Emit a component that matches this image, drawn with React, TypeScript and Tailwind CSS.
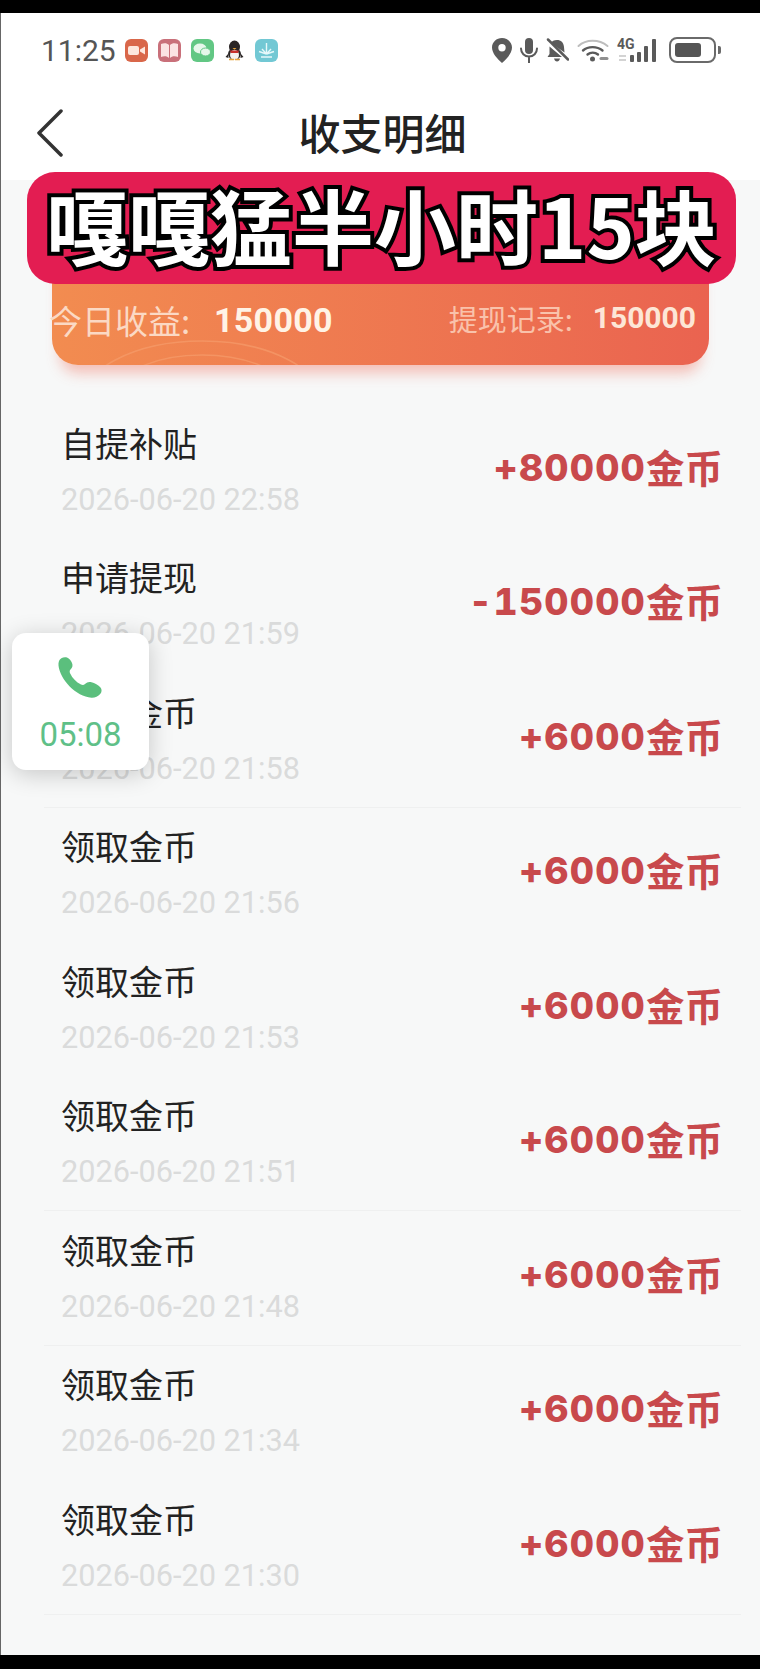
import React from 'react';

const CJK = "font-['Noto_Sans_CJK_SC','Noto_Sans',sans-serif]";

interface Entry {
  title: string;
  time: string;
  amount: string;
  divider?: boolean;
}

const entries: Entry[] = [
  { title: '自提补贴', time: '2026-06-20 22:58', amount: '+80000' },
  { title: '申请提现', time: '2026-06-20 21:59', amount: '-150000' },
  { title: '领取金币', time: '2026-06-20 21:58', amount: '+6000', divider: true },
  { title: '领取金币', time: '2026-06-20 21:56', amount: '+6000' },
  { title: '领取金币', time: '2026-06-20 21:53', amount: '+6000' },
  { title: '领取金币', time: '2026-06-20 21:51', amount: '+6000', divider: true },
  { title: '领取金币', time: '2026-06-20 21:48', amount: '+6000', divider: true },
  { title: '领取金币', time: '2026-06-20 21:34', amount: '+6000' },
  { title: '领取金币', time: '2026-06-20 21:30', amount: '+6000', divider: true },
];

const AppIcon: React.FC<{ color: string; children: React.ReactNode }> = ({ color, children }) => (
  <div className={`w-[23px] h-[23px] rounded-[6px] flex items-center justify-center ${color}`}>{children}</div>
);

const NotificationIcons = () => (
  <div className="flex items-center gap-[10px] ml-[9px]">
    <AppIcon color="bg-[#d9674a]">
      <svg width="17" height="11" viewBox="0 0 17 11">
        <rect x="0" y="1" width="11" height="9" rx="2" fill="#fde7dd" />
        <path d="M12 4.500 17 1.500v8l-5-3z" fill="#fde7dd" />
      </svg>
    </AppIcon>
    <AppIcon color="bg-[#c9707a]">
      <svg width="17" height="15" viewBox="0 0 17 15">
        <path d="M0 1c3-1 6-1 8 1v13c-2-2-5-2-8-1z" fill="#fbe3e3" />
        <path d="M17 1c-3-1-6-1-8 1v13c2-2 5-2 8-1z" fill="#fbe3e3" />
      </svg>
    </AppIcon>
    <AppIcon color="bg-[#62c784]">
      <svg width="18" height="14" viewBox="0 0 18 14">
        <ellipse cx="7" cy="5.500" rx="6.500" ry="5" fill="#e6f7ea" />
        <ellipse cx="12.500" cy="9" rx="5" ry="4" fill="#e6f7ea" stroke="#62c784" />
      </svg>
    </AppIcon>
    <svg width="19" height="21" viewBox="0 0 19 21" className="mx-[1px]">
      <ellipse cx="9.500" cy="7" rx="5.500" ry="6.500" fill="#2b2626" />
      <ellipse cx="9.500" cy="14" rx="6.500" ry="6" fill="#2b2626" />
      <ellipse cx="9.500" cy="15" rx="4.500" ry="5" fill="#f5f0ee" />
      <path d="M5 10.500h9l-1 2.500H6z" fill="#c9302c" />
      <path d="M7.500 8h4l-2 1.800z" fill="#e8a33a" />
      <path d="M3 14 .5 17l3 1zM16 14l2.500 3-3 1z" fill="#2b2626" />
      <path d="M4 19.500h5M10 19.500h5" stroke="#e8a33a" strokeWidth="1.500" />
    </svg>
    <AppIcon color="bg-[#72c8d4]">
      <svg width="17" height="15" viewBox="0 0 17 15" fill="none" stroke="#e6f8fa" strokeWidth="1.400">
        <path d="M8.500 0v11M8.500 11 4 6M8.500 11 13 6M8.500 11 1 8.500M8.500 11 16 8.500M3 14h11" />
      </svg>
    </AppIcon>
  </div>
);

const SystemIcons = () => (
  <div className="flex items-center text-[#5a5a5a]">
    <svg width="20" height="25" viewBox="0 0 20 25" fill="currentColor">
      <path fillRule="evenodd" d="M10 0c5.500 0 10 4.200 10 9.500 0 5.500-5 11-10 15.500C5 20.500 0 15 0 9.500 0 4.200 4.500 0 10 0zm0 6a3.700 3.700 0 1 0 0 7.400A3.700 3.700 0 0 0 10 6z" />
    </svg>
    <svg width="18" height="25" viewBox="0 0 18 25" className="ml-[8px]" fill="currentColor">
      <rect x="5" y="0" width="8" height="16" rx="4" />
      <path d="M1 10.500c0 4.500 3.500 8 8 8s8-3.500 8-8M9 18.500V25" fill="none" stroke="currentColor" strokeWidth="2" strokeLinecap="round" />
    </svg>
    <svg width="23" height="24" viewBox="0 0 23 24" className="ml-[8px]" fill="currentColor">
      <path d="M11 2c4 0 6.500 2.500 7 7l.5 5.500L5 5c1-2 3-3 6-3z" />
      <path d="M3.500 8.500 16 19H1.500l2-3z" />
      <path d="M8 20.500h6c-.5 2-1.500 3-3 3s-2.500-1-3-3z" />
      <path d="M2 1.500 22 21.500" stroke="currentColor" strokeWidth="2.500" strokeLinecap="round" />
    </svg>
    <svg width="32" height="24" viewBox="0 0 32 24" className="ml-[8px]" fill="none" strokeLinecap="round">
      <path d="M1.500 8C9 1 22 1 30.500 8" stroke="#bdbdbd" strokeWidth="2" />
      <path d="M6 12.500c5-4.500 14-4.500 19.500 0" stroke="currentColor" strokeWidth="2.400" />
      <path d="M10.500 16.500c3-2.500 7.500-2.500 10.500 0" stroke="currentColor" strokeWidth="2.400" />
      <circle cx="15.500" cy="21" r="2.500" fill="currentColor" />
      <path d="M24 20.500h6" stroke="#8f8f8f" strokeWidth="3" />
    </svg>
    <div className="ml-[8px] relative w-[43px] h-[25px]">
      <span className="absolute left-0 -top-[3px] text-[14px] leading-[18px] font-bold font-['Roboto',sans-serif]">4G</span>
      <svg width="43" height="25" viewBox="0 0 43 25" fill="currentColor">
        <rect x="13" y="17" width="4" height="7" rx="1" />
        <rect x="20" y="14" width="4" height="10" rx="1" />
        <rect x="27" y="8" width="4" height="16" rx="1" />
        <rect x="35" y="1" width="4" height="23" rx="1" />
        <path d="M2 18h7M2 22h7" stroke="#c5c5c5" strokeWidth="1.500" />
      </svg>
    </div>
    <div className="ml-[9px] flex items-center">
      <div className="w-[47px] h-[26px] rounded-[8px] border-2 border-[#6a6a6a] p-[4px]">
        <div className="w-[26px] h-full rounded-[3px] bg-[#555]" />
      </div>
      <div className="ml-[2px] w-[3px] h-[8px] rounded-r-[2px] bg-[#6a6a6a]" />
    </div>
  </div>
);

const SummaryCard = () => (
  <div className="relative h-[175px] rounded-b-[26px] rounded-t-[16px] bg-gradient-to-r from-[#f28c50] to-[#ea6350] shadow-[0_16px_14px_-8px_rgba(238,110,90,0.42)]">
    {/* faint ripple lines behind the left figure */}
    <svg className="absolute left-0 bottom-0" width="300" height="60" viewBox="0 0 300 60" fill="none" stroke="#f6a070" strokeWidth="1.500" strokeOpacity="0.6">
      <ellipse cx="150" cy="100" rx="70" ry="38" />
      <ellipse cx="150" cy="100" rx="95" ry="50" />
      <ellipse cx="150" cy="100" rx="122" ry="64" />
    </svg>
    <div className={`absolute inset-x-0 bottom-[23px] h-[44px] flex items-center justify-between ${CJK}`}>
      <div className="flex items-center -ml-[3px]">
        <span className="text-[33px] leading-[44px] text-[#fbd9c4] w-[165px] whitespace-nowrap">今日收益:</span>
        <span className="text-[34px] leading-[44px] font-bold text-[#fff3e6] font-['Roboto',sans-serif] tracking-[0.3px]">150000</span>
      </div>
      <div className="flex items-center pr-[13px] -mt-[4px]">
        <span className="text-[29px] leading-[44px] text-[#f9c2ab] w-[144px] whitespace-nowrap">提现记录:</span>
        <span className="text-[30px] leading-[44px] font-bold text-[#fde6d6] font-['Roboto',sans-serif]">150000</span>
      </div>
    </div>
  </div>
);

const CallBubble = () => (
  <div className="absolute left-[11px] top-[620px] w-[137px] h-[137px] rounded-[14px] bg-white shadow-[0_4px_24px_rgba(0,0,0,0.2)] flex flex-col items-center">
    <svg className="mt-[23px] -ml-[2px]" width="46" height="45" viewBox="0 0 46 44" fill="#5bbf7d">
      <path d="M2 4.500C3 1.500 7 0 10 1c2.500 1 4 3 5 5.500 1 2.500.5 4.500-1.500 6.500-1 1-1 2.500-.3 4 2.300 4.800 5.800 8.500 10.800 11 1.500.7 3 .5 4-.5 2-2 4-2.500 6.500-1.800 3 .8 7 2.800 9 5.300 1.500 2 1.500 4.500-.3 6.500-2 2.500-5.500 4-8.700 3.800C19 40 3 23 1.500 9c-.2-1.500 0-3 .5-4.500z" />
    </svg>
    <span className="mt-[15px] text-[33px] leading-[38px] text-[#5fc088] font-['Roboto',sans-serif]">05:08</span>
  </div>
);

const App: React.FC = () => {
  return (
    <div className={`w-[760px] h-[1669px] bg-black pt-[13px] pb-[14px] overflow-hidden ${CJK}`}>
      <div className="relative h-full bg-[#f7f8f8] border-l border-[#666]">
        <div className="bg-white h-[167px]">
          <div className="h-[74px] pl-[40px] pr-[39px] flex items-center justify-between">
            <div className="flex items-center">
              <span className="text-[30px] leading-none text-[#555] font-['Roboto',sans-serif] mt-[1px]">11:25</span>
              <NotificationIcons />
            </div>
            <SystemIcons />
          </div>
          <div className="relative h-[93px] pl-[4px] flex items-start justify-center">
            <svg className="absolute left-[35px] top-[22px]" width="28" height="48" viewBox="0 0 28 48" fill="none" stroke="#333" strokeWidth="3.500" strokeLinecap="round" strokeLinejoin="round">
              <path d="M25 2 3 24l22 22" />
            </svg>
            <h1 className="text-[42px] leading-[60px] font-medium text-[#222] mt-[15px]">收支明细</h1>
          </div>
        </div>

        <div className="px-[51px] pt-[10px] pb-[39px]">
          <SummaryCard />
        </div>

        <div className="ml-[43px] mr-[19px]">
          {entries.map((entry, idx) => (
            <div
              key={idx}
              className={`h-[134.500px] pl-[17px] pr-[18px] border-b flex items-center justify-between ${entry.divider ? 'border-[#eff0f0]' : 'border-transparent'}`}
            >
              <div className="flex flex-col mt-[1px]">
                <span className="text-[34px] leading-[44px] text-[#222]">{entry.title}</span>
                <span className="mt-[13px] text-[30.700px] leading-[44px] text-[#dadbdb] font-['Roboto',sans-serif]">{entry.time}</span>
              </div>
              <div className="flex items-center -mt-[6px]">
                <span className="text-[37.500px] leading-[50px] font-extrabold tabular-nums tracking-[1.200px] text-[#c8494c] font-['Inter',sans-serif]">{entry.amount}</span>
                <span className="-mt-[4px] text-[38.500px] leading-[50px] font-bold text-[#c8494c]">金币</span>
              </div>
            </div>
          ))}
        </div>

        <CallBubble />

        {/* promo strip laid over the header and summary card */}
        <div className="absolute left-[26px] top-[159px] w-[709px] h-[112px] rounded-[28px] bg-[#e31d52] flex items-center justify-center">
          <span className="text-[82px] leading-none font-bold text-white whitespace-nowrap [-webkit-text-stroke:8px_#000] [paint-order:stroke_fill] -mt-[9px]">
            嘎嘎猛半小时15块
          </span>
        </div>
      </div>
    </div>
  );
};

export default App;
